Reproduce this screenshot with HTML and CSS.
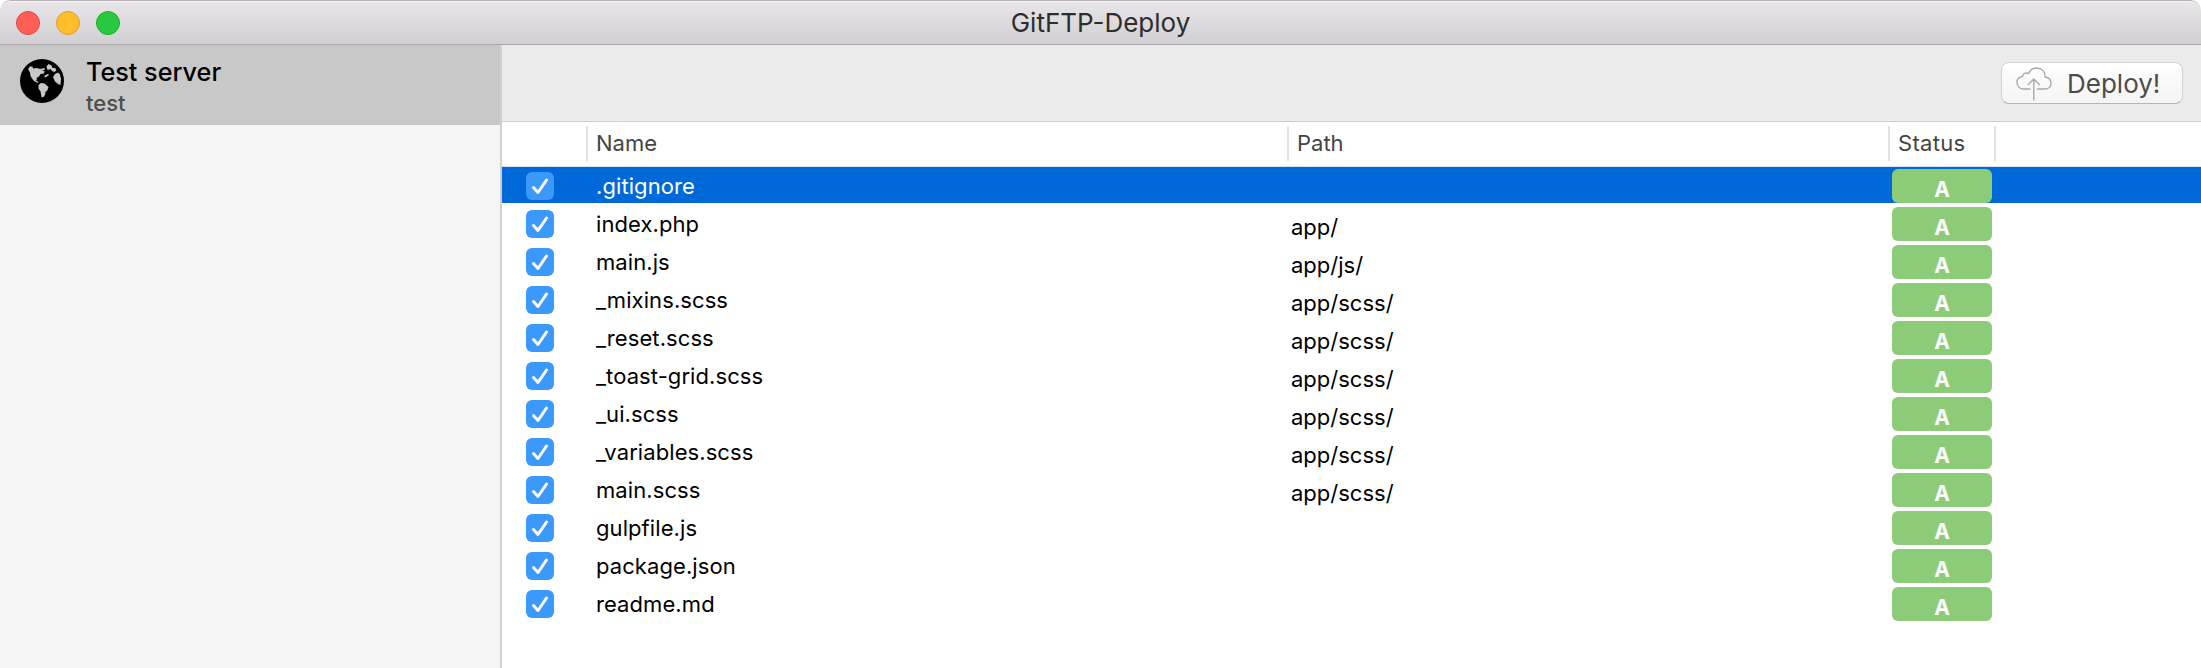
FILE: index.html
```
<!DOCTYPE html>
<html lang="en">
<head>
<meta charset="utf-8">
<title>GitFTP-Deploy</title>
<link rel="stylesheet" href="styles.css">
</head>
<body>
<div class="window">
  <header class="titlebar">
    <div class="lights"><span class="light close"></span><span class="light minimize"></span><span class="light expand"></span></div>
    <h1 class="title">GitFTP-Deploy</h1>
  </header>
  <div class="body">
    <aside class="sidebar">
      <div class="server">
        <svg class="globe" viewBox="0 0 44 44"><circle cx="22" cy="22" r="22" fill="#000"/><path fill="#c8c8c8" d="M8 10L10 7.500L12.500 7.500L13 9.500L17 9L20 10L24.500 9L25 10.500L22 11.500L24.500 12L24 14.500L20.500 15L19 17.500L16.500 19L17 20.500L16 21.500L18.500 23L18 24L14 22L12 19.500L10.500 17L10 13.500ZM26.500 7.500L28.500 5L31.500 6.500L32.500 9L35 9L36.500 11L34.500 13L32 12L30.500 10L27.500 11ZM33 18L35 15L38 13.500L40 15.500L41 20L40.500 26L38 25L35 22.500ZM24 17L28 15L29 16L25.500 18.500ZM18.500 26L21 24L24.500 24.500L28.500 28L27.500 31L25.500 33L25 36L23 38.500L21.500 38L20.500 32.500L18.500 29.500Z"/></svg>
        <div class="server-text"><div class="server-name">Test server</div><div class="server-sub">test</div></div>
      </div>
    </aside>
    <main class="main">
      <div class="toolbar">
        <button class="deploy">
          <svg class="cloud" viewBox="0 0 36 34" fill="none" stroke="#a9a9a9" stroke-width="1.4" stroke-linecap="round" stroke-linejoin="round"><path d="M14 22H8C4 22 1 19.500 1 15.500C1 12 3.500 9.800 6.500 9.500C6.500 6.500 10 5 12.500 6.700C14 3 17 1 20.500 1C26 1 29.500 5 29 10C32.500 10.500 35 13 35 16.200C35 19.500 32.500 22 29 22H21.500M17.800 33V12M12.300 17.500L17.800 12L23.300 17.500"/></svg>
          <span class="deploy-label">Deploy!</span>
        </button>
      </div>
      <div class="thead"><span class="th"></span><span class="th">Name</span><span class="th">Path</span><span class="th status">Status</span></div>
      <div class="rows" id="rows"></div>
    </main>
  </div>
</div>
<script src="script.js"></script>
</body>
</html>
```

FILE: styles.css
```
* { box-sizing: border-box; }
body { margin: 0; background: #fff; font-family: Inter, "Liberation Sans", sans-serif; font-size: 22px; }
.window { width: 2201px; height: 668px; display: flex; flex-direction: column; overflow: hidden; border-radius: 10px 10px 0 0; background: #fff; }
.titlebar { height: 45px; flex: none; display: grid; grid-template-columns: 1fr auto 1fr; align-items: center; padding: 1px 16px 0; border-top: 1px solid #b9b3b9; border-bottom: 1px solid #aba8ab; box-shadow: inset 0 1px #f4f3f4; border-radius: 10px 10px 0 0; background: linear-gradient(#e8e6e8, #d1cfd1); }
.lights { display: flex; gap: 16px; }
.light { width: 24px; height: 24px; border-radius: 50%; border: 1px solid; }
.close { background: #ff5f57; border-color: #e2463f; }
.minimize { background: #ffbd2e; border-color: #dfa023; }
.expand { background: #28c940; border-color: #1dad2b; }
.title { margin: 0; font-size: 26px; line-height: 30px; font-weight: 400; color: #2e2d2e; }
.body { flex: 1; display: flex; }
.sidebar { width: 502px; flex: none; background: #f5f5f5; border-right: 2px solid #d0d0d0; }
.server { height: 80px; display: flex; background: #c8c8c8; padding: 14px 0 0 20px; gap: 22px; }
.globe { width: 44px; height: 44px; flex: none; }
.server-text { margin-top: -1px; }
.server-name { font-size: 25.200px; line-height: 28px; font-weight: 500; }
.server-sub { font-size: 22px; line-height: 28px; margin-top: 3px; font-weight: 500; color: #4d4d4d; }
.main { flex: 1; display: flex; flex-direction: column; }
.toolbar { height: 77px; flex: none; display: flex; justify-content: flex-end; padding: 17px 18px 0 0; background: #ebebeb; border-bottom: 1px solid #cfcfcf; }
.deploy { width: 182px; height: 42px; display: flex; align-items: flex-start; gap: 15px; padding: 4px 0 0 14px; font: inherit; border: 1px solid #d2d2d2; border-bottom-color: #b5b5b5; border-radius: 8px; background: linear-gradient(#fff, #f4f4f4); }
.cloud { width: 36px; height: 34px; flex: none; }
.deploy-label { font-size: 26px; line-height: 33px; color: #4c4c4c; }
.thead { height: 45px; flex: none; display: grid; grid-template-columns: 86px 701px 601px 106px; border-bottom: 1px solid #d5e2f0; padding-top: 4px; color: #444; }
.th { height: 35px; border-right: 2px solid #e2e2e2; padding-left: 8px; line-height: 35px; }
.status { letter-spacing: 0.300px; }
.rows { display: flex; flex-direction: column; gap: 2px; }
.row { height: 36px; display: grid; grid-template-columns: 94px 695px 601px 100px; line-height: 36px; color: #000; }
.row.selected { background: #0069d9; color: #fff; }
.check { width: 28px; height: 28px; margin: 5px 0 0 24px; }
.name { padding-top: 1px; letter-spacing: 0.080px; }
.path { padding-top: 4px; }
.badge { height: 34px; margin-top: 2px; border-radius: 6px; background: #8ccb77; color: #fff; font-size: 21px; font-weight: 700; text-align: center; padding-top: 4px; line-height: 33px; }
```

FILE: script.js
```
const files = [
  [".gitignore", ""], ["index.php", "app/"], ["main.js", "app/js/"],
  ["_mixins.scss", "app/scss/"], ["_reset.scss", "app/scss/"], ["_toast-grid.scss", "app/scss/"],
  ["_ui.scss", "app/scss/"], ["_variables.scss", "app/scss/"], ["main.scss", "app/scss/"],
  ["gulpfile.js", ""], ["package.json", ""], ["readme.md", ""]
];
const check = '<svg class="check" viewBox="0 0 28 28"><rect width="28" height="28" rx="6" fill="#3b99fc"/><path d="M7.500 15.500L12 20.500L20.500 8" fill="none" stroke="#fff" stroke-width="3" stroke-linecap="round" stroke-linejoin="round"/></svg>';
document.getElementById("rows").innerHTML = files.map(([name, path], i) =>
  `<div class="row${i ? "" : " selected"}">${check}<span class="name">${name}</span><span class="path">${path}</span><span class="badge">A</span></div>`).join("");
```
